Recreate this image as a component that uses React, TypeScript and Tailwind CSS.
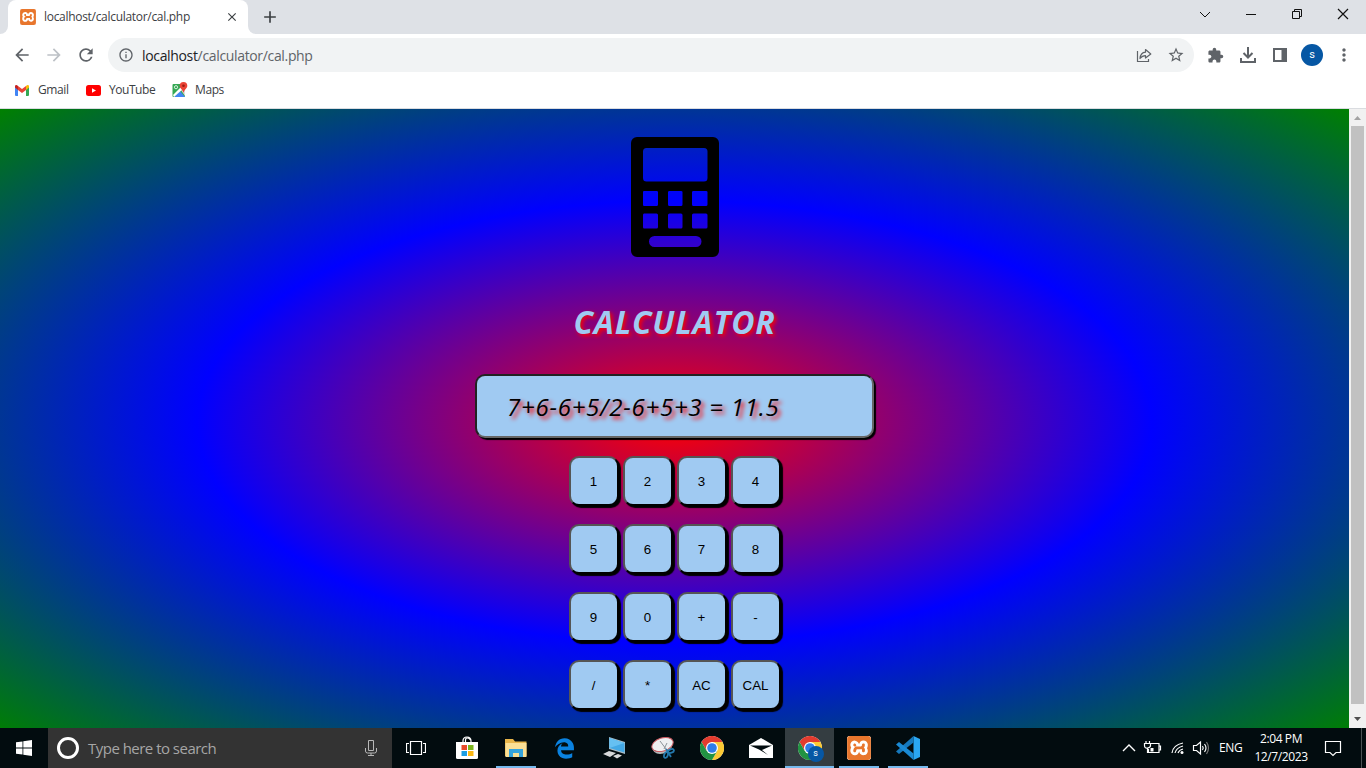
import React from "react";
import {
  MdArrowBack,
  MdArrowForward,
  MdRefresh,
  MdInfoOutline,
  MdStarBorder,
  MdExtension,
  MdMoreVert,
  MdAdd,
  MdClose,
} from "react-icons/md";
import { FaEdgeLegacy } from "react-icons/fa6";
import { SiXampp } from "react-icons/si";

const UI = "font-['Open_Sans','Noto_Sans',sans-serif]";

function XamppIcon({ className }: { className: string }) {
  return (
    <span className={`flex items-center justify-center bg-[#e8762d] text-white ${className}`}>
      <SiXampp className="h-full w-full bg-white text-[#e8762d]" />
    </span>
  );
}

function ChromeIcon({ className }: { className: string }) {
  return (
    <svg viewBox="0 0 48 48" className={className}>
      <circle cx="24" cy="24" r="24" fill="#fff" />
      <path d="M24 12h20.8A24 24 0 0 0 3.2 12l10.4 18z" fill="#e33b2e" />
      <path d="M34.4 30 24 48A24 24 0 0 0 44.8 12H24z" fill="#fcc934" />
      <path d="M13.6 30 3.2 12A24 24 0 0 0 24 48l10.4-18z" fill="#229342" />
      <circle cx="24" cy="24" r="12" fill="#fff" />
      <circle cx="24" cy="24" r="9.6" fill="#2f7de9" />
    </svg>
  );
}

function TitleBar() {
  return (
    <div className="flex h-[34px] shrink-0 bg-[#dee1e6]">
      <div className="flex w-2 bg-white">
        <div className="w-2 rounded-br-lg bg-[#dee1e6]" />
      </div>
      <div className="flex w-60 items-center rounded-t-lg bg-white pl-3">
        <XamppIcon className="h-4 w-4 rounded-[2px] overflow-hidden" />
        <span className="ml-2 w-[178px] whitespace-nowrap text-[12px] tracking-[-0.3px] text-[#3c4043]">
          localhost/calculator/cal.php
        </span>
        <MdClose className="ml-[3px] h-[14px] w-[14px] text-[#3c4043]" />
      </div>
      <div className="flex w-2 bg-white">
        <div className="w-2 rounded-bl-lg bg-[#dee1e6]" />
      </div>
      <div className="flex flex-1 items-center pl-1">
        <MdAdd className="h-5 w-5 text-[#3c4043]" />
      </div>
      <svg viewBox="0 0 166 34" className="h-[34px] w-[166px]" fill="none" stroke="#111" strokeWidth="1">
        <path d="m0 12 5 5 5-5" />
        <path d="M46 14.500h10M92.500 11.500h7v7h-7zM94.500 11v-1.500h7v7H100" />
        <path d="m138 9 10 10M148 9l-10 10" strokeWidth="1.2" />
      </svg>
    </div>
  );
}

function Toolbar() {
  return (
    <div className="flex h-[42px] shrink-0 items-center bg-white pl-3 text-[#5f6368]">
      <MdArrowBack className="h-5 w-5" />
      <MdArrowForward className="ml-3 h-5 w-5 text-[#bdc1c6]" />
      <MdRefresh className="ml-3 h-5 w-5" />
      <div className="ml-3 flex h-[34px] w-[1086px] items-center rounded-full bg-[#f1f3f4] pl-[10px]">
        <MdInfoOutline className="h-4 w-4" />
        <span className="ml-2 flex-1 whitespace-nowrap text-[14px] tracking-[-0.34px] text-[#5f6368]">
          <span className="text-[#202124]">localhost</span>/calculator/cal.php
        </span>
        <svg viewBox="0 0 16 16" className="h-4 w-4" fill="none" stroke="#5f6368" strokeWidth="1.2">
          <path d="M1.500 4v10.500h11V12" />
          <path d="M9.500 2.500 14.800 7l-5.300 4V8.600C7 8.600 5.500 9.500 4 11.500c.3-3.500 2-6 5.500-6.300z" strokeLinejoin="round" />
        </svg>
        <MdStarBorder className="mr-[9px] ml-[15px] h-[18px] w-[18px]" />
      </div>
      <MdExtension className="ml-[13px] h-[17px] w-[17px]" />
      <svg viewBox="0 0 18 18" className="ml-[15px] h-[18px] w-[18px]" fill="none" stroke="#5f6368" strokeWidth="2">
        <path d="M9 1v10M4.500 7 9 11.500 13.500 7M2 12v4h14v-4" />
      </svg>
      <svg viewBox="0 0 14 14" className="ml-4 h-[14px] w-[14px]" fill="#5f6368">
        <path d="M0 0h14v14H0zM2 2v10h6.500V2z" fillRule="evenodd" />
      </svg>
      <span className="ml-[14px] flex h-[22px] w-[22px] items-center justify-center rounded-full bg-[#0657a4] font-['Roboto',sans-serif] text-[11px] text-white">
        s
      </span>
      <MdMoreVert className="ml-[11px] h-5 w-5" />
    </div>
  );
}

function Bookmarks() {
  return (
    <div className="flex h-[33px] shrink-0 items-center border-b border-[#dadce0] bg-white pb-[4px] pl-[15px] text-[12px] text-[#3c4043]">
      <svg viewBox="0 0 28 22" className="h-[11px] w-[14px]">
        <path d="M0 3v17a2 2 0 0 0 2 2h4V8z" fill="#4285f4" />
        <path d="M28 3v17a2 2 0 0 1-2 2h-4V8z" fill="#34a853" />
        <path d="M22 2v8l6-5V3c0-3-3-4-6-1z" fill="#fbbc04" />
        <path d="M6 2v8l8 6 8-6V2l-8 6z" fill="#ea4335" />
        <path d="M6 2v8L0 5V3c0-3 3-4 6-1z" fill="#c5221f" />
      </svg>
      <span className="ml-[9px] w-8 whitespace-nowrap tracking-[-0.4px]">Gmail</span>
      <svg viewBox="0 0 15 11" className="ml-4 h-[11px] w-[15px]">
        <rect width="15" height="11" rx="2.500" fill="#f00" />
        <path d="M6 3.200v4.600l4-2.300z" fill="#fff" />
      </svg>
      <span className="ml-[8px] w-[47px] whitespace-nowrap tracking-[-0.45px]">YouTube</span>
      <svg viewBox="0 0 16 16" className="ml-4 h-4 w-4">
        <rect x="0.500" y="2" width="12.500" height="13" rx="1" fill="#34a853" />
        <path d="m2 15 6-6 5 6z" fill="#4285f4" />
        <path d="m1 13 9-9 2 2-10 9z" fill="#fff" />
        <path d="m9 8 4 6V8z" fill="#dcdfe2" />
        <path d="M11.500 0a3.800 3.800 0 0 0-3.800 3.800c0 2.700 3 3.700 3.800 7.200.8-3.500 3.800-4.500 3.800-7.200A3.800 3.800 0 0 0 11.500 0z" fill="#ea4335" />
        <circle cx="11.500" cy="3.800" r="1.300" fill="#991b12" />
        <circle cx="4" cy="5.200" r="1.600" fill="none" stroke="#fff" strokeWidth=".8" />
      </svg>
      <span className="ml-[7px] whitespace-nowrap tracking-[-0.4px]">Maps</span>
    </div>
  );
}

const ROWS = [
  ["1", "2", "3", "4"],
  ["5", "6", "7", "8"],
  ["9", "0", "+", "-"],
  ["/", "*", "AC", "CAL"],
];

function Calculator() {
  return (
    <main className="h-[619px] w-[1349px] overflow-hidden">
      <div className="flex h-[626px] flex-col items-center bg-[radial-gradient(red,blue,green)] pt-7">
        <svg viewBox="0 0 88 120" className="ml-[1px] h-[120px] w-[88px] shrink-0">
          <path
            fillRule="evenodd"
            d="M6 0h76a6 6 0 0 1 6 6v108a6 6 0 0 1-6 6H6a6 6 0 0 1-6-6V6a6 6 0 0 1 6-6zM15.500 11a3.500 3.500 0 0 0-3.500 3.500v26.500a3.500 3.500 0 0 0 3.500 3.500h57.500a3.500 3.500 0 0 0 3.500-3.500V14.500a3.500 3.500 0 0 0-3.500-3.500zM13 54q-1 0-1 1v12.500q0 1.500 1 1.500h12.500q1.500 0 1.500-1.500V55q0-1-1.500-1zM38.500 54q-1.500 0-1.500 1v12.500q0 1.500 1.500 1.500h11.500q1.500 0 1.500-1.500V55q0-1-1.500-1zM62.500 54q-1.500 0-1.500 1v12.500q0 1.500 1.500 1.500h12.500q1.500 0 1.500-1.500V55q0-1-1.500-1zM13 76.500q-1 0-1 1.500v12q0 1.500 1 1.500h12.500q1.500 0 1.500-1.500V78q0-1.500-1.500-1.500zM38.500 76.500q-1.500 0-1.500 1.500v12q0 1.500 1.500 1.500h11.500q1.500 0 1.500-1.500V78q0-1.500-1.500-1.500zM62.500 76.500q-1.500 0-1.500 1.500v12q0 1.500 1.500 1.500h12.500q1.500 0 1.500-1.500V78q0-1.500-1.500-1.500zM23.500 99a5.500 5.500 0 0 0 0 11h41.500a5.500 5.500 0 0 0 0-11z"
          />
        </svg>
        <h1 className="mt-[43px] h-11 whitespace-nowrap text-[32px] leading-[44px] font-bold tracking-[0.75px] text-[#a0caf2] italic [text-shadow:2px_2px_4px_red]">
          CALCULATOR
        </h1>
        <div className="mt-[30px] flex h-[64px] w-[399px] shrink-0 items-center rounded-[10px] border-2 border-t-[#222] border-r-[#666] border-b-[#666] border-l-[#222] bg-[#a0caf2] pt-[2px] pl-[30px] text-[24px] whitespace-pre tracking-[0.75px] text-black italic shadow-[2px_2px_1px_#000] [text-shadow:3px_3px_4px_red]">
          7+6-6+5/2-6+5+3 = 11.5
        </div>
        <div className="mt-[18px] grid grid-cols-4 gap-x-1 gap-y-[18px] font-['Liberation_Sans',sans-serif] text-[13.333px]">
          {ROWS.flat().map((k) => (
            <button
              key={k}
              className="h-[50px] w-[50px] rounded-[10px] border-2 border-t-[#555] border-r-black border-b-black border-l-[#555] bg-[#a0caf2] pt-[2px] text-black shadow-[2px_2px_1px_#000]"
            >
              {k}
            </button>
          ))}
        </div>
      </div>
    </main>
  );
}

function ScrollBar() {
  return (
    <div className="flex w-[17px] flex-col items-center bg-[#f1f1f1]">
      <svg viewBox="0 0 17 17" className="h-[17px] w-[17px]">
        <path d="m5 11 3.500-4 3.500 4z" fill="#a3a3a3" />
      </svg>
      <div className="h-[578px] w-[13px] bg-[#c1c1c1]" />
      <div className="h-[7px]" />
      <svg viewBox="0 0 17 17" className="h-[17px] w-[17px]">
        <path d="m5 6 3.500 4L12 6z" fill="#505050" />
      </svg>
    </div>
  );
}

function Task({ children, line, active }: { children: React.ReactNode; line?: boolean; active?: boolean }) {
  return (
    <div className={`flex h-10 w-[49px] flex-col items-center ${active ? "bg-[#343d41]" : ""}`}>
      <div className="flex h-[38px] items-center pt-[2px]">{children}</div>
      <div className={`h-[2px] ${active ? "w-full" : "w-10"} ${line ? "bg-[#76b9ed]" : ""}`} />
    </div>
  );
}

function TaskBar() {
  return (
    <footer className="flex h-10 shrink-0 bg-[#020c0f] text-white">
      <div className="flex w-12 items-center justify-center">
        <svg viewBox="0 0 16 16" className="h-4 w-4" fill="#fff">
          <path d="M0 2.300 6.500 1.400v6.200H0zM7.300 1.300 16 0v7.600H7.300zM0 8.400h6.500v6.200L0 13.700zM7.300 8.400H16V16l-8.700-1.300z" />
        </svg>
      </div>
      <div className="flex w-[344px] items-center bg-[#333] pl-[9px]">
        <span className="h-[22px] w-[22px] rounded-full border-[3px] border-white" />
        <span className="ml-[9px] flex-1 text-[15px] tracking-[-0.52px] whitespace-nowrap text-[#a6a6a6]">
          Type here to search
        </span>
        <svg viewBox="0 0 12 18" className="mr-[15px] h-[18px] w-3" fill="none" stroke="#b8b8b8">
          <path d="M3.500 1.500h5v10h-5zM.5 9v3q0 2 2 2h7q2 0 2-2V9M6 14v3M3 16.500h6" />
        </svg>
      </div>
      <div className="flex w-[50px] items-center pl-[14px]">
        <svg viewBox="0 0 20 14" className="h-[14px] w-5" fill="none" stroke="#fff" strokeWidth="1.200">
          <path d="M4.500.5h11v13h-11zM3 2.500H.5v9H3M17 2.500h2.500v9H17" />
        </svg>
      </div>
      <Task>
        <svg viewBox="0 0 24 24" className="h-6 w-6">
          <path d="M8 7V5q0-4 4-4t4 4v2M10.500 6V4q0-2 2-2t3 2" fill="none" stroke="#fff" strokeWidth="1.200" />
          <path d="M1 6h22v15.500q0 1.500-1.500 1.500h-19Q1 23 1 21.500z" fill="#fff" />
          <path d="M6.500 9H12v5H6.500z" fill="#e74b2b" />
          <path d="M13 9h5.500v5H13z" fill="#7bb51d" />
          <path d="M6.500 15H12v5H6.500z" fill="#1b9de2" />
          <path d="M13 15h5.500v5H13z" fill="#fcb813" />
        </svg>
      </Task>
      <Task line>
        <svg viewBox="0 0 22 20" className="h-5 w-[22px]">
          <path d="M0 1h8l2 2.500h11.500V18H0z" fill="#e9b64a" />
          <path d="M.5 5h21v14H.5z" fill="#fbe095" />
          <path d="M4 11h14v8h-4v-4H8v4H4z" fill="#35a4dc" />
        </svg>
      </Task>
      <Task>
        <FaEdgeLegacy className="h-[21px] w-[21px] text-[#0a82e0]" />
      </Task>
      <Task>
        <svg viewBox="0 0 24 22" className="h-[22px] w-6">
          <path d="m7 0 16 5v12L7 12z" fill="#a9bcc6" />
          <path d="m7.500 1 15 5v9.500L7.500 11z" fill="#43a9e6" />
          <path d="m7.500 1 15 5-15 5z" fill="#66c0f2" />
          <path d="m1 17 6-3 7 2-6 4zM11 19l5-2 4 1.500-5 3z" fill="#d7d9da" />
        </svg>
      </Task>
      <Task>
        <svg viewBox="0 0 24 22" className="h-[22px] w-6">
          <path d="M1 10q2 7 12 3l8-6v3q-5 7-12 7-7 0-8-7z" fill="#b4b8ba" />
          <ellipse cx="11.500" cy="7.500" rx="11" ry="6.500" transform="rotate(-18 11.500 7.500)" fill="#eef0f1" stroke="#c95b62" />
          <path d="m9 4 6 8M16 6l-3 6" stroke="#8b9297" />
          <g fill="none" stroke="#2479ad" strokeWidth="1.800">
            <ellipse cx="20" cy="14" rx="3" ry="1.800" transform="rotate(-20 20 14)" />
            <ellipse cx="15" cy="18" rx="1.800" ry="3" transform="rotate(20 15 18)" />
            <path d="m15 12 5 8" />
          </g>
        </svg>
      </Task>
      <Task>
        <ChromeIcon className="h-6 w-6" />
      </Task>
      <Task>
        <svg viewBox="0 0 24 20" className="h-5 w-6">
          <path d="M0 7 12 0l12 7v13H0z" fill="#fff" />
          <path d="M1 7.500h22L13 12l6 5-9-5.500z" fill="#020c0f" />
        </svg>
      </Task>
      <Task line active>
        <div className="relative">
          <ChromeIcon className="h-6 w-6" />
          <span className="absolute top-[10px] left-[10px] flex h-4 w-4 items-center justify-center rounded-full bg-[#0657a4] font-['Roboto',sans-serif] text-[9px]">
            s
          </span>
        </div>
      </Task>
      <Task line>
        <XamppIcon className="h-6 w-6 rounded-[3px] overflow-hidden" />
      </Task>
      <Task line>
        <svg viewBox="0 0 24 24" className="h-6 w-6">
          <path d="M17.500 0 24 3v18l-6.500 3z" fill="#2aa7f3" />
          <path d="M17.500 0v6.500L3 18 0 15.500z" fill="#1679bd" />
          <path d="M0 8.500 3 6l14.500 11.500V24z" fill="#1a8ad4" />
        </svg>
      </Task>
      <div className="flex-1" />
      <div className="flex w-[244px] items-center">
        <svg viewBox="0 0 90 20" className="h-5 w-[90px]" fill="none" stroke="#fff" strokeWidth="1.200">
          <path d="m1 13 6-6 6 6" strokeWidth="1.400" />
          <path d="M29 5.500h8v9H26.500V11M37 8h1.500v4H37" />
          <path d="M24 3v3M27.500 3v3M22.500 5.500h6v2q0 2-3 2.500t-3-2.500zM25.500 10v5" />
          <path d="M28.500 10h3v3.500h-3z" fill="#fff" stroke="none" />
          <g>
            <path d="M50 15q1-8 11-10M53 15q1-5 8-7M56 15q1-3 5-4" />
            <circle cx="60" cy="14.500" r="1.500" fill="#fff" stroke="none" />
          </g>
          <path d="M71.500 7.500h3l4-3.500v12l-4-3.500h-3z" />
          <path d="M80.500 8q1.500 2 0 4M82.500 6q3 4 0 8" />
          <path d="M84.500 4q4 6 0 12" stroke="#777" />
        </svg>
        <span className="ml-[7px] w-6 text-[12px] tracking-[-0.4px]">ENG</span>
        <div className="ml-[8px] flex w-[60px] flex-col items-center text-[12px] leading-[18px] tracking-[-0.4px] whitespace-nowrap">
          <span>2:04 PM</span>
          <span>12/7/2023</span>
        </div>
        <svg viewBox="0 0 18 18" className="ml-[13px] h-[18px] w-[18px]" fill="none" stroke="#fff" strokeWidth="1.200">
          <path d="M1.500 2.500h15v11H12l-3 3-3-3H1.500z" />
        </svg>
        <span className="ml-[19px] h-10 w-px bg-[#4a5254]" />
      </div>
    </footer>
  );
}

export default function App() {
  return (
    <div className={`flex h-[768px] w-[1366px] flex-col overflow-hidden bg-white ${UI}`}>
      <TitleBar />
      <Toolbar />
      <Bookmarks />
      <div className="flex h-[619px] shrink-0">
        <Calculator />
        <ScrollBar />
      </div>
      <TaskBar />
    </div>
  );
}
